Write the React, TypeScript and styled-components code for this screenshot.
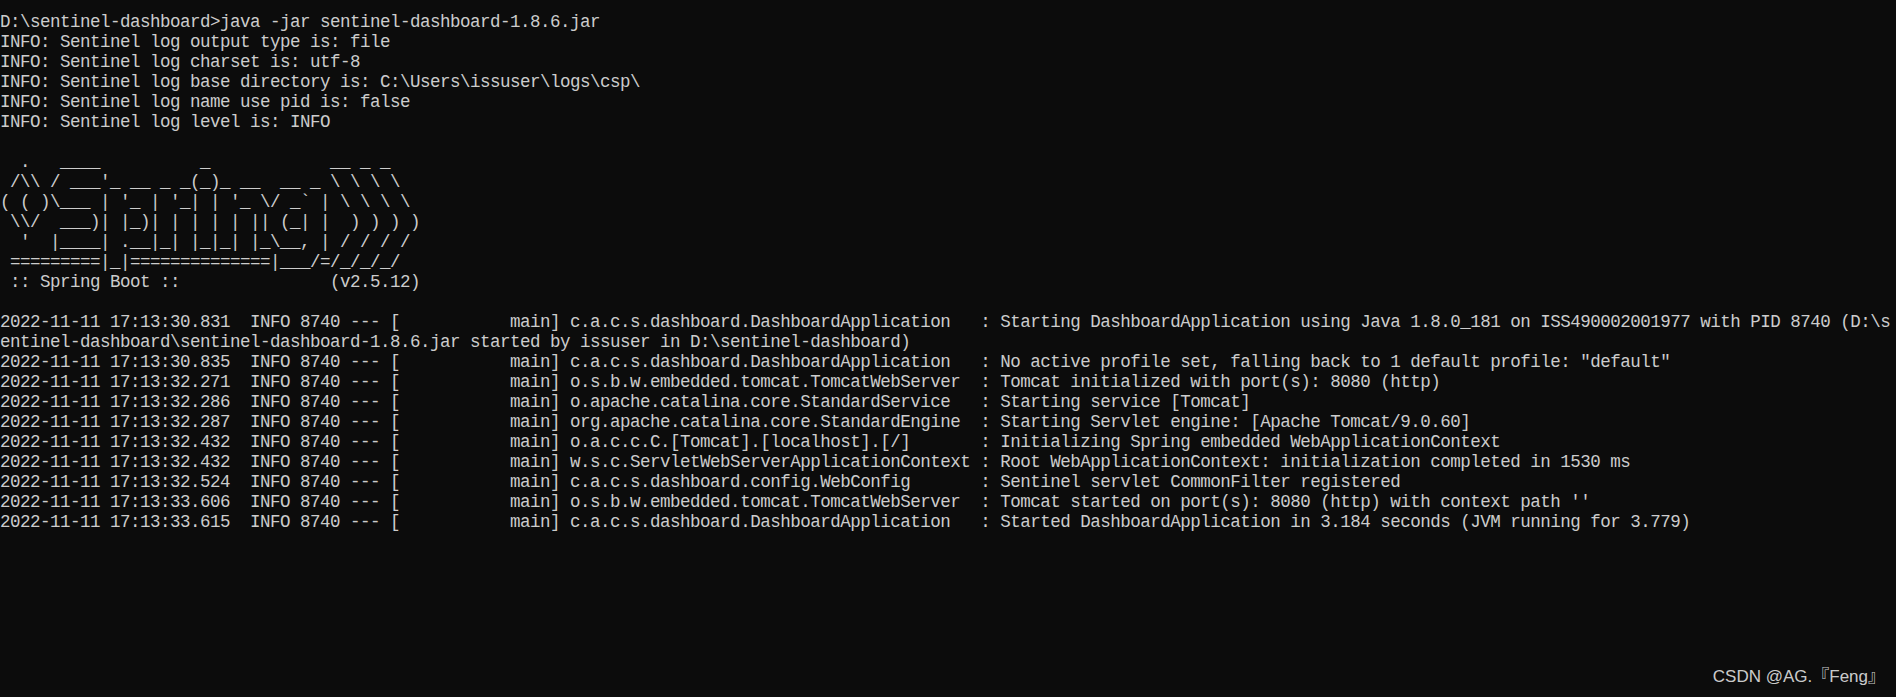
import React from 'react';
import styled, { createGlobalStyle } from 'styled-components';

const GlobalStyle = createGlobalStyle`
  html, body {
    margin: 0;
    padding: 0;
    background: #0c0c0c;
  }
`;

const COLS = 189;

const Screen = styled.main`
  position: relative;
  box-sizing: border-box;
  width: 1896px;
  height: 697px;
  overflow: hidden;
  padding-top: 12px;
  background: #0c0c0c;
`;

const Console = styled.div`
  display: flex;
  flex-direction: column;
  font-family: "Liberation Mono", "DejaVu Sans Mono", monospace;
  font-size: 17.5px;
  letter-spacing: -0.5px;
  line-height: 20px;
  color: #cccccc;
  white-space: pre;
`;

const Row = styled.div`
  height: 20px;
`;

const Watermark = styled.div`
  position: absolute;
  right: 11px;
  bottom: 10px;
  font-family: "Liberation Sans", "Noto Sans CJK SC", sans-serif;
  font-size: 17px;
  line-height: 20px;
  color: rgba(255, 255, 255, 0.8);
  white-space: nowrap;
`;

const preamble = [
  String.raw`D:\sentinel-dashboard>java -jar sentinel-dashboard-1.8.6.jar`,
  'INFO: Sentinel log output type is: file',
  'INFO: Sentinel log charset is: utf-8',
  String.raw`INFO: Sentinel log base directory is: C:\Users\issuser\logs\csp\ `.trimEnd(),
  'INFO: Sentinel log name use pid is: false',
  'INFO: Sentinel log level is: INFO',
  '',
];

const banner = [
  String.raw`  .   ____          _            __ _ _`,
  String.raw` /\\ / ___'_ __ _ _(_)_ __  __ _ \ \ \ \ `.trimEnd(),
  String.raw`( ( )\___ | '_ | '_| | '_ \/ _${'`'} | \ \ \ \ `.trimEnd(),
  String.raw` \\/  ___)| |_)| | | | | || (_| |  ) ) ) )`,
  String.raw`  '  |____| .__|_| |_|_| |_\__, | / / / /`,
  String.raw` =========|_|==============|___/=/_/_/_/`,
  ' :: Spring Boot ::               (v2.5.12)',
  '',
];

type Log = { time: string; logger: string; message: string };

const logs: Log[] = [
  {
    time: '2022-11-11 17:13:30.831',
    logger: 'c.a.c.s.dashboard.DashboardApplication',
    message: String.raw`Starting DashboardApplication using Java 1.8.0_181 on ISS490002001977 with PID 8740 (D:\sentinel-dashboard\sentinel-dashboard-1.8.6.jar started by issuser in D:\sentinel-dashboard)`,
  },
  {
    time: '2022-11-11 17:13:30.835',
    logger: 'c.a.c.s.dashboard.DashboardApplication',
    message: 'No active profile set, falling back to 1 default profile: "default"',
  },
  {
    time: '2022-11-11 17:13:32.271',
    logger: 'o.s.b.w.embedded.tomcat.TomcatWebServer',
    message: 'Tomcat initialized with port(s): 8080 (http)',
  },
  {
    time: '2022-11-11 17:13:32.286',
    logger: 'o.apache.catalina.core.StandardService',
    message: 'Starting service [Tomcat]',
  },
  {
    time: '2022-11-11 17:13:32.287',
    logger: 'org.apache.catalina.core.StandardEngine',
    message: 'Starting Servlet engine: [Apache Tomcat/9.0.60]',
  },
  {
    time: '2022-11-11 17:13:32.432',
    logger: 'o.a.c.c.C.[Tomcat].[localhost].[/]',
    message: 'Initializing Spring embedded WebApplicationContext',
  },
  {
    time: '2022-11-11 17:13:32.432',
    logger: 'w.s.c.ServletWebServerApplicationContext',
    message: 'Root WebApplicationContext: initialization completed in 1530 ms',
  },
  {
    time: '2022-11-11 17:13:32.524',
    logger: 'c.a.c.s.dashboard.config.WebConfig',
    message: 'Sentinel servlet CommonFilter registered',
  },
  {
    time: '2022-11-11 17:13:33.606',
    logger: 'o.s.b.w.embedded.tomcat.TomcatWebServer',
    message: "Tomcat started on port(s): 8080 (http) with context path ''",
  },
  {
    time: '2022-11-11 17:13:33.615',
    logger: 'c.a.c.s.dashboard.DashboardApplication',
    message: 'Started DashboardApplication in 3.184 seconds (JVM running for 3.779)',
  },
];

const formatLog = (l: Log) =>
  `${l.time}  INFO 8740 --- [           main] ${l.logger.padEnd(40)} : ${l.message}`;

const wrap = (text: string): string[] => {
  if (text.length === 0) return [''];
  const out: string[] = [];
  for (let i = 0; i < text.length; i += COLS) out.push(text.slice(i, i + COLS));
  return out;
};

const rows: string[] = [
  ...preamble,
  ...banner,
  ...logs.map(formatLog).flatMap(wrap),
];

export default function App() {
  return (
    <>
      <GlobalStyle />
      <Screen>
        <Console>
          {rows.map((r, i) => (
            <Row key={i}>{r}</Row>
          ))}
        </Console>
        <Watermark>CSDN @AG.『Feng』</Watermark>
      </Screen>
    </>
  );
}
